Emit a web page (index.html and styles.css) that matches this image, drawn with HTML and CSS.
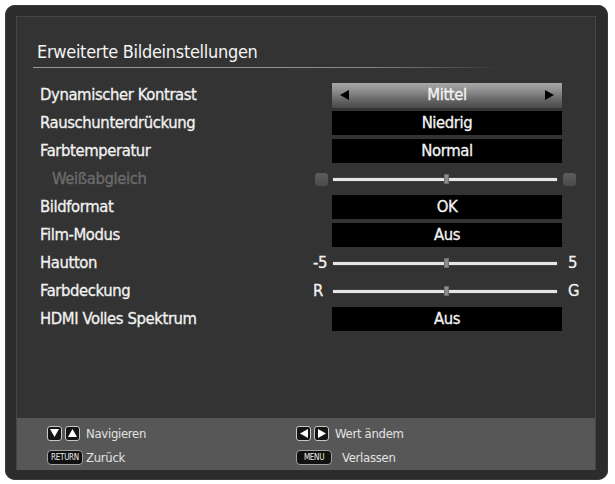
FILE: index.html
```html
<!DOCTYPE html>
<html lang="de">
<head>
<meta charset="utf-8">
<title>Erweiterte Bildeinstellungen</title>
<link rel="stylesheet" href="styles.css">
</head>
<body>
<div class="frame">
  <div class="screen">
    <div class="main">
      <h1 class="title">Erweiterte Bildeinstellungen</h1>
      <div class="rule"></div>
      <div class="rows">
        <div class="row">
          <span class="label">Dynamischer Kontrast</span>
          <span class="cap"></span>
          <span class="value select">
            <svg class="arrow" width="9" height="10" viewBox="0 0 9 10"><polygon points="9,0 9,10 0,5" fill="#000"/></svg>
            <span class="vtext">Mittel</span>
            <svg class="arrow" width="9" height="10" viewBox="0 0 9 10"><polygon points="0,0 0,10 9,5" fill="#000"/></svg>
          </span>
          <span class="cap"></span>
        </div>
        <div class="row">
          <span class="label">Rauschunterdrückung</span>
          <span class="cap"></span>
          <span class="value">Niedrig</span>
          <span class="cap"></span>
        </div>
        <div class="row">
          <span class="label">Farbtemperatur</span>
          <span class="cap"></span>
          <span class="value">Normal</span>
          <span class="cap"></span>
        </div>
        <div class="row">
          <span class="label sub">Weißabgleich</span>
          <span class="cap"><span class="knob"></span></span>
          <span class="slider"><span class="track"></span><span class="thumb"></span></span>
          <span class="cap right"><span class="knob"></span></span>
        </div>
        <div class="row">
          <span class="label">Bildformat</span>
          <span class="cap"></span>
          <span class="value">OK</span>
          <span class="cap"></span>
        </div>
        <div class="row">
          <span class="label">Film-Modus</span>
          <span class="cap"></span>
          <span class="value">Aus</span>
          <span class="cap"></span>
        </div>
        <div class="row">
          <span class="label">Hautton</span>
          <span class="cap">-5</span>
          <span class="slider"><span class="track"></span><span class="thumb"></span></span>
          <span class="cap right">5</span>
        </div>
        <div class="row">
          <span class="label">Farbdeckung</span>
          <span class="cap">R</span>
          <span class="slider"><span class="track"></span><span class="thumb"></span></span>
          <span class="cap right">G</span>
        </div>
        <div class="row">
          <span class="label">HDMI Volles Spektrum</span>
          <span class="cap"></span>
          <span class="value">Aus</span>
          <span class="cap"></span>
        </div>
      </div>
    </div>
    <div class="footer">
      <div class="hint">
        <span class="key"><svg width="9" height="8" viewBox="0 0 9 8"><polygon points="0,0 9,0 4.5,8" fill="#fff"/></svg></span>
        <span class="key"><svg width="9" height="8" viewBox="0 0 9 8"><polygon points="0,8 9,8 4.5,0" fill="#fff"/></svg></span>
        <span class="htext">Navigieren</span>
      </div>
      <div class="hint">
        <span class="key"><svg width="8" height="9" viewBox="0 0 8 9"><polygon points="8,0 8,9 0,4.5" fill="#fff"/></svg></span>
        <span class="key"><svg width="8" height="9" viewBox="0 0 8 9"><polygon points="0,0 0,9 8,4.5" fill="#fff"/></svg></span>
        <span class="htext">Wert ändem</span>
      </div>
      <div class="hint">
        <span class="badge">RETURN</span>
        <span class="htext">Zurück</span>
      </div>
      <div class="hint">
        <span class="badge">MENU</span>
        <span class="htext wide">Verlassen</span>
      </div>
    </div>
  </div>
</div>
</body>
</html>
```

FILE: styles.css
```css
html, body {
  margin: 0;
  padding: 0;
  background: #ffffff;
}

body {
  width: 615px;
  height: 484px;
  overflow: hidden;
  font-family: "Liberation Sans Narrow", "Arial Narrow", "DejaVu Sans Condensed", "DejaVu Sans", sans-serif;
  font-stretch: condensed;
  color: #f2f2f2;
}

.frame {
  margin: 5px 7px 0 5px;
  height: 475px;
  box-sizing: border-box;
  padding: 11px 12px 10px 11px;
  background: #2c2c2c;
  border-radius: 10px;
  box-shadow: inset 0 0 0 1px #3a3a3a;
}

.screen {
  height: 454px;
  box-sizing: border-box;
  border: 1px solid #464646;
  border-bottom: 0;
  background: #333333;
  display: flex;
  flex-direction: column;
}

.main {
  flex: 1;
  padding-top: 22px;
}

.title {
  margin: 0 0 0 20px;
  font-size: 18px;
  letter-spacing: -0.3px;
  line-height: 26px;
  font-weight: normal;
  color: #f4f4f4;
}

.rule {
  margin: 2px 0 13px 16px;
  width: 470px;
  height: 1px;
  background: linear-gradient(to right, #9a9a9a 0%, #8a8a8a 70%, rgba(138, 138, 138, 0) 100%);
}

.row {
  display: grid;
  grid-template-columns: 295px 20px 230px 20px;
  height: 28px;
  align-items: center;
}

.label {
  padding-left: 23px;
  font-size: 16.5px;
  letter-spacing: -0.4px;
  line-height: 28px;
  white-space: nowrap;
  -webkit-text-stroke: 0.3px currentColor;
}

.label.sub {
  padding-left: 35px;
  color: #6c6c6c;
}

.cap {
  display: flex;
  align-items: center;
  justify-content: flex-start;
  padding-left: 1px;
  font-size: 16.5px;
  letter-spacing: -0.4px;
  line-height: 28px;
  -webkit-text-stroke: 0.3px currentColor;
}

.cap.right {
  padding-left: 6px;
}

.knob {
  width: 13px;
  height: 13px;
  border-radius: 3px;
  background: linear-gradient(#5c5c5c, #4a4a4a);
  margin-left: 2px;
}

.cap.right .knob {
  margin-left: -5px;
}

.value {
  height: 24px;
  background: #000000;
  display: flex;
  align-items: center;
  justify-content: center;
  font-size: 16.5px;
  letter-spacing: -0.4px;
  line-height: 24px;
  color: #f4f4f4;
  -webkit-text-stroke: 0.3px currentColor;
}

.value.select {
  height: 25px;
  justify-content: space-between;
  padding: 0 8px;
  background: linear-gradient(to bottom, #a8a8a8 0%, #8a8a8a 35%, #636363 70%, #4a4a4a 100%);
}

.vtext {
  flex: 1;
  text-align: center;
}

.arrow {
  display: block;
}

.slider {
  position: relative;
  height: 28px;
  display: flex;
  align-items: center;
}

.track {
  display: block;
  margin: 0 5px 0 1px;
  flex: 1;
  height: 3px;
  background: #e6e6e6;
  box-shadow: 0 0 1px #bdbdbd;
}

.thumb {
  position: absolute;
  left: 112px;
  top: 9px;
  width: 5px;
  height: 10px;
  background: #8c8c8c;
  border: 1px solid #6e6e6e;
  box-sizing: border-box;
}

.footer {
  height: 52px;
  background: #575757;
  box-sizing: border-box;
  padding: 3px 0 0 30px;
  display: grid;
  grid-template-columns: 249px 1fr;
  grid-auto-rows: 24px;
  font-size: 13px;
  letter-spacing: -0.3px;
  color: #e2e2e2;
}

.hint {
  display: flex;
  align-items: center;
}

.key {
  width: 15px;
  height: 15px;
  box-sizing: border-box;
  border: 1px solid #c8c8c8;
  border-radius: 3px;
  background: #151515;
  display: flex;
  align-items: center;
  justify-content: center;
  margin-right: 3px;
}

.key svg {
  display: block;
}

.htext {
  margin-left: 3px;
  white-space: nowrap;
}

.htext.wide {
  margin-left: 10px;
}

.badge {
  width: 36px;
  height: 15px;
  box-sizing: border-box;
  border: 1px solid #a0a0a0;
  border-radius: 4px;
  background: #111111;
  color: #eeeeee;
  font-size: 8px;
  line-height: 13px;
  text-align: center;
  letter-spacing: -0.3px;
}
```
